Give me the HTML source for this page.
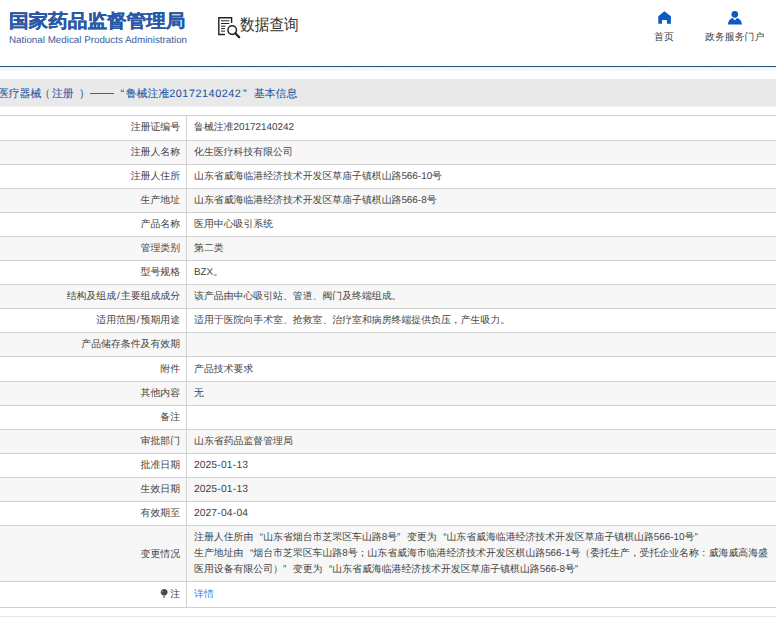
<!DOCTYPE html>
<html>
<head>
<meta charset="utf-8">
<style>
html,body{margin:0;padding:0;background:#fff;}
body{width:776px;height:617px;overflow:hidden;position:relative;font-family:"Liberation Sans",sans-serif;text-rendering:geometricPrecision;}
.abs{position:absolute;white-space:nowrap;}
#logo-cn{left:9px;top:9px;transform:scaleY(0.93);transform-origin:0 55%;font-size:19.6px;line-height:24px;font-weight:bold;-webkit-text-stroke:0.3px #2a58a6;color:#2a58a6;}
#logo-en{left:9px;top:35px;font-size:9.8px;line-height:12px;color:#3a5d9c;}
#dq{left:240px;top:16px;font-size:14.7px;line-height:20px;color:#333;transform:scaleY(1.1);transform-origin:0 50%;}
.nav{font-size:9.9px;line-height:12px;color:#444;}
#topline{left:0;top:66px;width:776px;height:1px;background:#2c5584;}
#cyan{left:0;top:67px;width:776px;height:1px;background:#dcf4fb;}
#hatch{left:0;top:68px;width:776px;height:3px;
 background:linear-gradient(to bottom,rgba(190,225,245,0.35),rgba(255,255,255,0)),repeating-linear-gradient(-45deg,#fff 0,#fff 1.7px,#e2e2e2 1.7px,#e2e2e2 2.5px);}
#crumb{left:0;top:79px;width:776px;height:27px;background:#e9e9e9;border-bottom:1px solid #f1f1f3;}
#crumb .dash{position:absolute;left:90px;top:14px;width:24px;height:1px;background:#3362ad;}
#crumb span{position:absolute;left:-1px;top:7.5px;font-size:10.8px;line-height:14px;color:#2455a3;-webkit-text-stroke:0.08px #2455a3;white-space:nowrap;}
.row{position:absolute;left:0;width:776px;border-top:1px solid #d2d2d2;box-sizing:border-box;}
.row.g{background:#f7f7f7;}
.lab{position:absolute;right:596px;font-size:9.9px;line-height:14px;color:#444;margin-top:1px;white-space:nowrap;text-align:right;}
.val{position:absolute;left:194px;font-size:9.9px;line-height:14px;color:#444;margin-top:1px;white-space:nowrap;}
q1{display:inline-block;width:1em;text-align:right;}
q2{display:inline-block;width:1em;text-align:left;}
d{font-size:10.3px;letter-spacing:0.05px;}
hy{margin:0 0.2px;}
sl{margin:0 1px;}
#vline{left:186px;top:115px;width:1px;height:492px;background:#d2d2d2;}
#botline{left:0;top:607px;width:776px;height:1px;background:#d2d2d2;}
#footline{left:0;top:616px;width:776px;height:1px;background:#e6e6e6;}
</style>
</head>
<body>
<div class="abs" id="logo-cn">国家药品监督管理局</div>
<div class="abs" id="logo-en">National Medical Products Administration</div>

<svg class="abs" style="left:216px;top:15px" width="26" height="26" viewBox="0 0 26 26">
 <path d="M9,19.5 H2.8 V2.7 H15.6 V8" fill="none" stroke="#222" stroke-width="1.4"/>
 <path d="M5,5.8 H13.3 M5,8.5 H13.3 M5,11.2 H9.5 M5,13.6 H9 M5,16.1 H9" stroke="#222" stroke-width="1"/>
 <circle cx="16.2" cy="15.1" r="4.3" fill="#fff" stroke="#222" stroke-width="1.5"/>
 <path d="M19.3,18.3 L23.2,22.3" stroke="#222" stroke-width="2.2" stroke-linecap="round"/>
</svg>
<div class="abs" id="dq">数据查询</div>

<svg class="abs" style="left:656px;top:9px" width="18" height="18" viewBox="0 0 18 18">
 <path d="M8.4,2.2 L14.9,7.3 V14.8 H10.9 V11 H6 V14.8 H2.3 V7.3 Z" fill="#0c5ac4"/>
</svg>
<div class="abs nav" style="left:654px;top:31.5px">首页</div>

<svg class="abs" style="left:726px;top:9px" width="18" height="18" viewBox="0 0 18 18">
 <circle cx="8.8" cy="5.3" r="3.35" fill="#0c5ac4"/>
 <path d="M1.9,15.4 C2.2,11.7 4.2,9.8 6.6,9 L8.8,11.6 L11,9 C13.4,9.8 15.6,11.7 16,15.4 Z" fill="#0c5ac4"/>
</svg>
<div class="abs nav" style="left:705px;top:31.5px">政务服务门户</div>

<div class="abs" id="topline"></div>
<div class="abs" id="cyan"></div>
<svg class="abs" style="left:0;top:68px" width="776" height="4" viewBox="0 0 776 4"><defs><linearGradient id="hg" x1="0" y1="0" x2="0" y2="1"><stop offset="0" stop-color="#cde3f0"/><stop offset="1" stop-color="#d0d0d0"/></linearGradient></defs><path d="M2.20,0.1l-2.3,2.6M5.76,0.1l-2.3,2.6M9.32,0.1l-2.3,2.6M12.88,0.1l-2.3,2.6M16.44,0.1l-2.3,2.6M20.00,0.1l-2.3,2.6M23.56,0.1l-2.3,2.6M27.12,0.1l-2.3,2.6M30.68,0.1l-2.3,2.6M34.24,0.1l-2.3,2.6M37.80,0.1l-2.3,2.6M41.36,0.1l-2.3,2.6M44.92,0.1l-2.3,2.6M48.48,0.1l-2.3,2.6M52.04,0.1l-2.3,2.6M55.60,0.1l-2.3,2.6M59.16,0.1l-2.3,2.6M62.72,0.1l-2.3,2.6M66.28,0.1l-2.3,2.6M69.84,0.1l-2.3,2.6M73.40,0.1l-2.3,2.6M76.96,0.1l-2.3,2.6M80.52,0.1l-2.3,2.6M84.08,0.1l-2.3,2.6M87.64,0.1l-2.3,2.6M91.20,0.1l-2.3,2.6M94.76,0.1l-2.3,2.6M98.32,0.1l-2.3,2.6M101.88,0.1l-2.3,2.6M105.44,0.1l-2.3,2.6M109.00,0.1l-2.3,2.6M112.56,0.1l-2.3,2.6M116.12,0.1l-2.3,2.6M119.68,0.1l-2.3,2.6M123.24,0.1l-2.3,2.6M126.80,0.1l-2.3,2.6M130.36,0.1l-2.3,2.6M133.92,0.1l-2.3,2.6M137.48,0.1l-2.3,2.6M141.04,0.1l-2.3,2.6M144.60,0.1l-2.3,2.6M148.16,0.1l-2.3,2.6M151.72,0.1l-2.3,2.6M155.28,0.1l-2.3,2.6M158.84,0.1l-2.3,2.6M162.40,0.1l-2.3,2.6M165.96,0.1l-2.3,2.6M169.52,0.1l-2.3,2.6M173.08,0.1l-2.3,2.6M176.64,0.1l-2.3,2.6M180.20,0.1l-2.3,2.6M183.76,0.1l-2.3,2.6M187.32,0.1l-2.3,2.6M190.88,0.1l-2.3,2.6M194.44,0.1l-2.3,2.6M198.00,0.1l-2.3,2.6M201.56,0.1l-2.3,2.6M205.12,0.1l-2.3,2.6M208.68,0.1l-2.3,2.6M212.24,0.1l-2.3,2.6M215.80,0.1l-2.3,2.6M219.36,0.1l-2.3,2.6M222.92,0.1l-2.3,2.6M226.48,0.1l-2.3,2.6M230.04,0.1l-2.3,2.6M233.60,0.1l-2.3,2.6M237.16,0.1l-2.3,2.6M240.72,0.1l-2.3,2.6M244.28,0.1l-2.3,2.6M247.84,0.1l-2.3,2.6M251.40,0.1l-2.3,2.6M254.96,0.1l-2.3,2.6M258.52,0.1l-2.3,2.6M262.08,0.1l-2.3,2.6M265.64,0.1l-2.3,2.6M269.20,0.1l-2.3,2.6M272.76,0.1l-2.3,2.6M276.32,0.1l-2.3,2.6M279.88,0.1l-2.3,2.6M283.44,0.1l-2.3,2.6M287.00,0.1l-2.3,2.6M290.56,0.1l-2.3,2.6M294.12,0.1l-2.3,2.6M297.68,0.1l-2.3,2.6M301.24,0.1l-2.3,2.6M304.80,0.1l-2.3,2.6M308.36,0.1l-2.3,2.6M311.92,0.1l-2.3,2.6M315.48,0.1l-2.3,2.6M319.04,0.1l-2.3,2.6M322.60,0.1l-2.3,2.6M326.16,0.1l-2.3,2.6M329.72,0.1l-2.3,2.6M333.28,0.1l-2.3,2.6M336.84,0.1l-2.3,2.6M340.40,0.1l-2.3,2.6M343.96,0.1l-2.3,2.6M347.52,0.1l-2.3,2.6M351.08,0.1l-2.3,2.6M354.64,0.1l-2.3,2.6M358.20,0.1l-2.3,2.6M361.76,0.1l-2.3,2.6M365.32,0.1l-2.3,2.6M368.88,0.1l-2.3,2.6M372.44,0.1l-2.3,2.6M376.00,0.1l-2.3,2.6M379.56,0.1l-2.3,2.6M383.12,0.1l-2.3,2.6M386.68,0.1l-2.3,2.6M390.24,0.1l-2.3,2.6M393.80,0.1l-2.3,2.6M397.36,0.1l-2.3,2.6M400.92,0.1l-2.3,2.6M404.48,0.1l-2.3,2.6M408.04,0.1l-2.3,2.6M411.60,0.1l-2.3,2.6M415.16,0.1l-2.3,2.6M418.72,0.1l-2.3,2.6M422.28,0.1l-2.3,2.6M425.84,0.1l-2.3,2.6M429.40,0.1l-2.3,2.6M432.96,0.1l-2.3,2.6M436.52,0.1l-2.3,2.6M440.08,0.1l-2.3,2.6M443.64,0.1l-2.3,2.6M447.20,0.1l-2.3,2.6M450.76,0.1l-2.3,2.6M454.32,0.1l-2.3,2.6M457.88,0.1l-2.3,2.6M461.44,0.1l-2.3,2.6M465.00,0.1l-2.3,2.6M468.56,0.1l-2.3,2.6M472.12,0.1l-2.3,2.6M475.68,0.1l-2.3,2.6M479.24,0.1l-2.3,2.6M482.80,0.1l-2.3,2.6M486.36,0.1l-2.3,2.6M489.92,0.1l-2.3,2.6M493.48,0.1l-2.3,2.6M497.04,0.1l-2.3,2.6M500.60,0.1l-2.3,2.6M504.16,0.1l-2.3,2.6M507.72,0.1l-2.3,2.6M511.28,0.1l-2.3,2.6M514.84,0.1l-2.3,2.6M518.40,0.1l-2.3,2.6M521.96,0.1l-2.3,2.6M525.52,0.1l-2.3,2.6M529.08,0.1l-2.3,2.6M532.64,0.1l-2.3,2.6M536.20,0.1l-2.3,2.6M539.76,0.1l-2.3,2.6M543.32,0.1l-2.3,2.6M546.88,0.1l-2.3,2.6M550.44,0.1l-2.3,2.6M554.00,0.1l-2.3,2.6M557.56,0.1l-2.3,2.6M561.12,0.1l-2.3,2.6M564.68,0.1l-2.3,2.6M568.24,0.1l-2.3,2.6M571.80,0.1l-2.3,2.6M575.36,0.1l-2.3,2.6M578.92,0.1l-2.3,2.6M582.48,0.1l-2.3,2.6M586.04,0.1l-2.3,2.6M589.60,0.1l-2.3,2.6M593.16,0.1l-2.3,2.6M596.72,0.1l-2.3,2.6M600.28,0.1l-2.3,2.6M603.84,0.1l-2.3,2.6M607.40,0.1l-2.3,2.6M610.96,0.1l-2.3,2.6M614.52,0.1l-2.3,2.6M618.08,0.1l-2.3,2.6M621.64,0.1l-2.3,2.6M625.20,0.1l-2.3,2.6M628.76,0.1l-2.3,2.6M632.32,0.1l-2.3,2.6M635.88,0.1l-2.3,2.6M639.44,0.1l-2.3,2.6M643.00,0.1l-2.3,2.6M646.56,0.1l-2.3,2.6M650.12,0.1l-2.3,2.6M653.68,0.1l-2.3,2.6M657.24,0.1l-2.3,2.6M660.80,0.1l-2.3,2.6M664.36,0.1l-2.3,2.6M667.92,0.1l-2.3,2.6M671.48,0.1l-2.3,2.6M675.04,0.1l-2.3,2.6M678.60,0.1l-2.3,2.6M682.16,0.1l-2.3,2.6M685.72,0.1l-2.3,2.6M689.28,0.1l-2.3,2.6M692.84,0.1l-2.3,2.6M696.40,0.1l-2.3,2.6M699.96,0.1l-2.3,2.6M703.52,0.1l-2.3,2.6M707.08,0.1l-2.3,2.6M710.64,0.1l-2.3,2.6M714.20,0.1l-2.3,2.6M717.76,0.1l-2.3,2.6M721.32,0.1l-2.3,2.6M724.88,0.1l-2.3,2.6M728.44,0.1l-2.3,2.6M732.00,0.1l-2.3,2.6M735.56,0.1l-2.3,2.6M739.12,0.1l-2.3,2.6M742.68,0.1l-2.3,2.6M746.24,0.1l-2.3,2.6M749.80,0.1l-2.3,2.6M753.36,0.1l-2.3,2.6M756.92,0.1l-2.3,2.6M760.48,0.1l-2.3,2.6M764.04,0.1l-2.3,2.6M767.60,0.1l-2.3,2.6M771.16,0.1l-2.3,2.6M774.72,0.1l-2.3,2.6M778.28,0.1l-2.3,2.6M781.84,0.1l-2.3,2.6M785.40,0.1l-2.3,2.6M788.96,0.1l-2.3,2.6" stroke="url(#hg)" stroke-width="0.8" fill="none"/></svg>
<div class="abs" id="crumb"><span style="left:-2px">医疗器械</span><span style="left:39.5px">（</span><span style="left:52px">注册</span><span style="left:79px">）</span><i class="dash"></i><span style="left:120.5px">“</span><span style="left:126px">鲁械注准<b style="font-weight:normal;letter-spacing:0.56px">20172140242</b></span><span style="left:243px">”</span><span style="left:254px">基本信息</span></div>

<div class="row" style="top:115px;height:25px;"><span class="lab" style="top:4.3px">注册证编号</span><span class="val" style="top:4.3px">鲁械注准20172140242</span></div>
<div class="row g" style="top:140px;height:24px;"><span class="lab" style="top:4px">注册人名称</span><span class="val" style="top:4px">化生医疗科技有限公司</span></div>
<div class="row" style="top:164px;height:24px;"><span class="lab" style="top:4px">注册人住所</span><span class="val" style="top:4px">山东省威海临港经济技术开发区草庙子镇棋山路566-10号</span></div>
<div class="row g" style="top:188px;height:24px;"><span class="lab" style="top:4px">生产地址</span><span class="val" style="top:4px">山东省威海临港经济技术开发区草庙子镇棋山路566-8号</span></div>
<div class="row" style="top:212px;height:24px;"><span class="lab" style="top:4px">产品名称</span><span class="val" style="top:4px">医用中心吸引系统</span></div>
<div class="row g" style="top:236px;height:24px;"><span class="lab" style="top:4px">管理类别</span><span class="val" style="top:4px">第二类</span></div>
<div class="row" style="top:260px;height:24px;"><span class="lab" style="top:4px">型号规格</span><span class="val" style="top:4px">BZX。</span></div>
<div class="row g" style="top:284px;height:24px;"><span class="lab" style="top:4px">结构及组成<sl>/</sl>主要组成成分</span><span class="val" style="top:4px">该产品由中心吸引站、管道、阀门及终端组成。</span></div>
<div class="row" style="top:308px;height:24px;"><span class="lab" style="top:4px">适用范围<sl>/</sl>预期用途</span><span class="val" style="top:4px">适用于医院向手术室、抢救室、治疗室和病房终端提供负压，产生吸力。</span></div>
<div class="row g" style="top:332px;height:24px;"><span class="lab" style="top:4px">产品储存条件及有效期</span></div>
<div class="row" style="top:356px;height:25px;"><span class="lab" style="top:5px">附件</span><span class="val" style="top:5px">产品技术要求</span></div>
<div class="row g" style="top:381px;height:24px;"><span class="lab" style="top:4px">其他内容</span><span class="val" style="top:4px">无</span></div>
<div class="row" style="top:405px;height:24px;"><span class="lab" style="top:4px">备注</span></div>
<div class="row g" style="top:429px;height:24px;"><span class="lab" style="top:4px">审批部门</span><span class="val" style="top:4px">山东省药品监督管理局</span></div>
<div class="row" style="top:453px;height:24px;"><span class="lab" style="top:4px">批准日期</span><span class="val" style="top:4px"><d>2025<hy>-</hy>01<hy>-</hy>13</d></span></div>
<div class="row g" style="top:477px;height:24px;"><span class="lab" style="top:4px">生效日期</span><span class="val" style="top:4px"><d>2025<hy>-</hy>01<hy>-</hy>13</d></span></div>
<div class="row" style="top:501px;height:24px;"><span class="lab" style="top:4px">有效期至</span><span class="val" style="top:4px"><d>2027<hy>-</hy>04<hy>-</hy>04</d></span></div>
<div class="row g" style="top:525px;height:56px;"><span class="lab" style="top:21px">变更情况</span><span class="val" style="top:2.8px;line-height:16.3px;">注册人住所由<q1>“</q1>山东省烟台市芝罘区车山路8号<q2>”</q2>变更为<q1>“</q1>山东省威海临港经济技术开发区草庙子镇棋山路566-10号<q2>”</q2><br>生产地址由<q1>“</q1>烟台市芝罘区车山路8号；山东省威海市临港经济技术开发区棋山路566-1号（委托生产，受托企业名称：威海威高海盛<br>医用设备有限公司）<q2>”</q2>变更为<q1>“</q1>山东省威海临港经济技术开发区草庙子镇棋山路566-8号<q2>”</q2></span></div>
<div class="row" style="top:581px;height:26px;"><span class="lab" style="top:5px">注</span><span class="val" style="top:5px;color:#3a7ee0">详情</span></div>

<svg class="abs" style="left:160px;top:588px" width="8" height="10" viewBox="0 0 8 10">
 <path d="M4.2,0.9 C6.3,0.9 7.6,2.4 7.6,4.2 C7.6,5.5 6.8,6.3 6.1,7 L5.7,7.6 H2.7 L2.3,7 C1.6,6.3 0.7,5.5 0.7,4.2 C0.7,2.4 2.1,0.9 4.2,0.9 Z" fill="#474747"/>
 <path d="M2.9,8.2 H5.1 V9.6 H2.9 Z" fill="#777"/>
 <path d="M2.1,4.4 C2.1,3.3 2.6,2.5 3.4,2.1" fill="none" stroke="#b5b5b5" stroke-width="0.7"/>
</svg>
<div class="abs" id="vline"></div>
<div class="abs" id="botline"></div>
<div class="abs" id="footline"></div>
</body>
</html>
